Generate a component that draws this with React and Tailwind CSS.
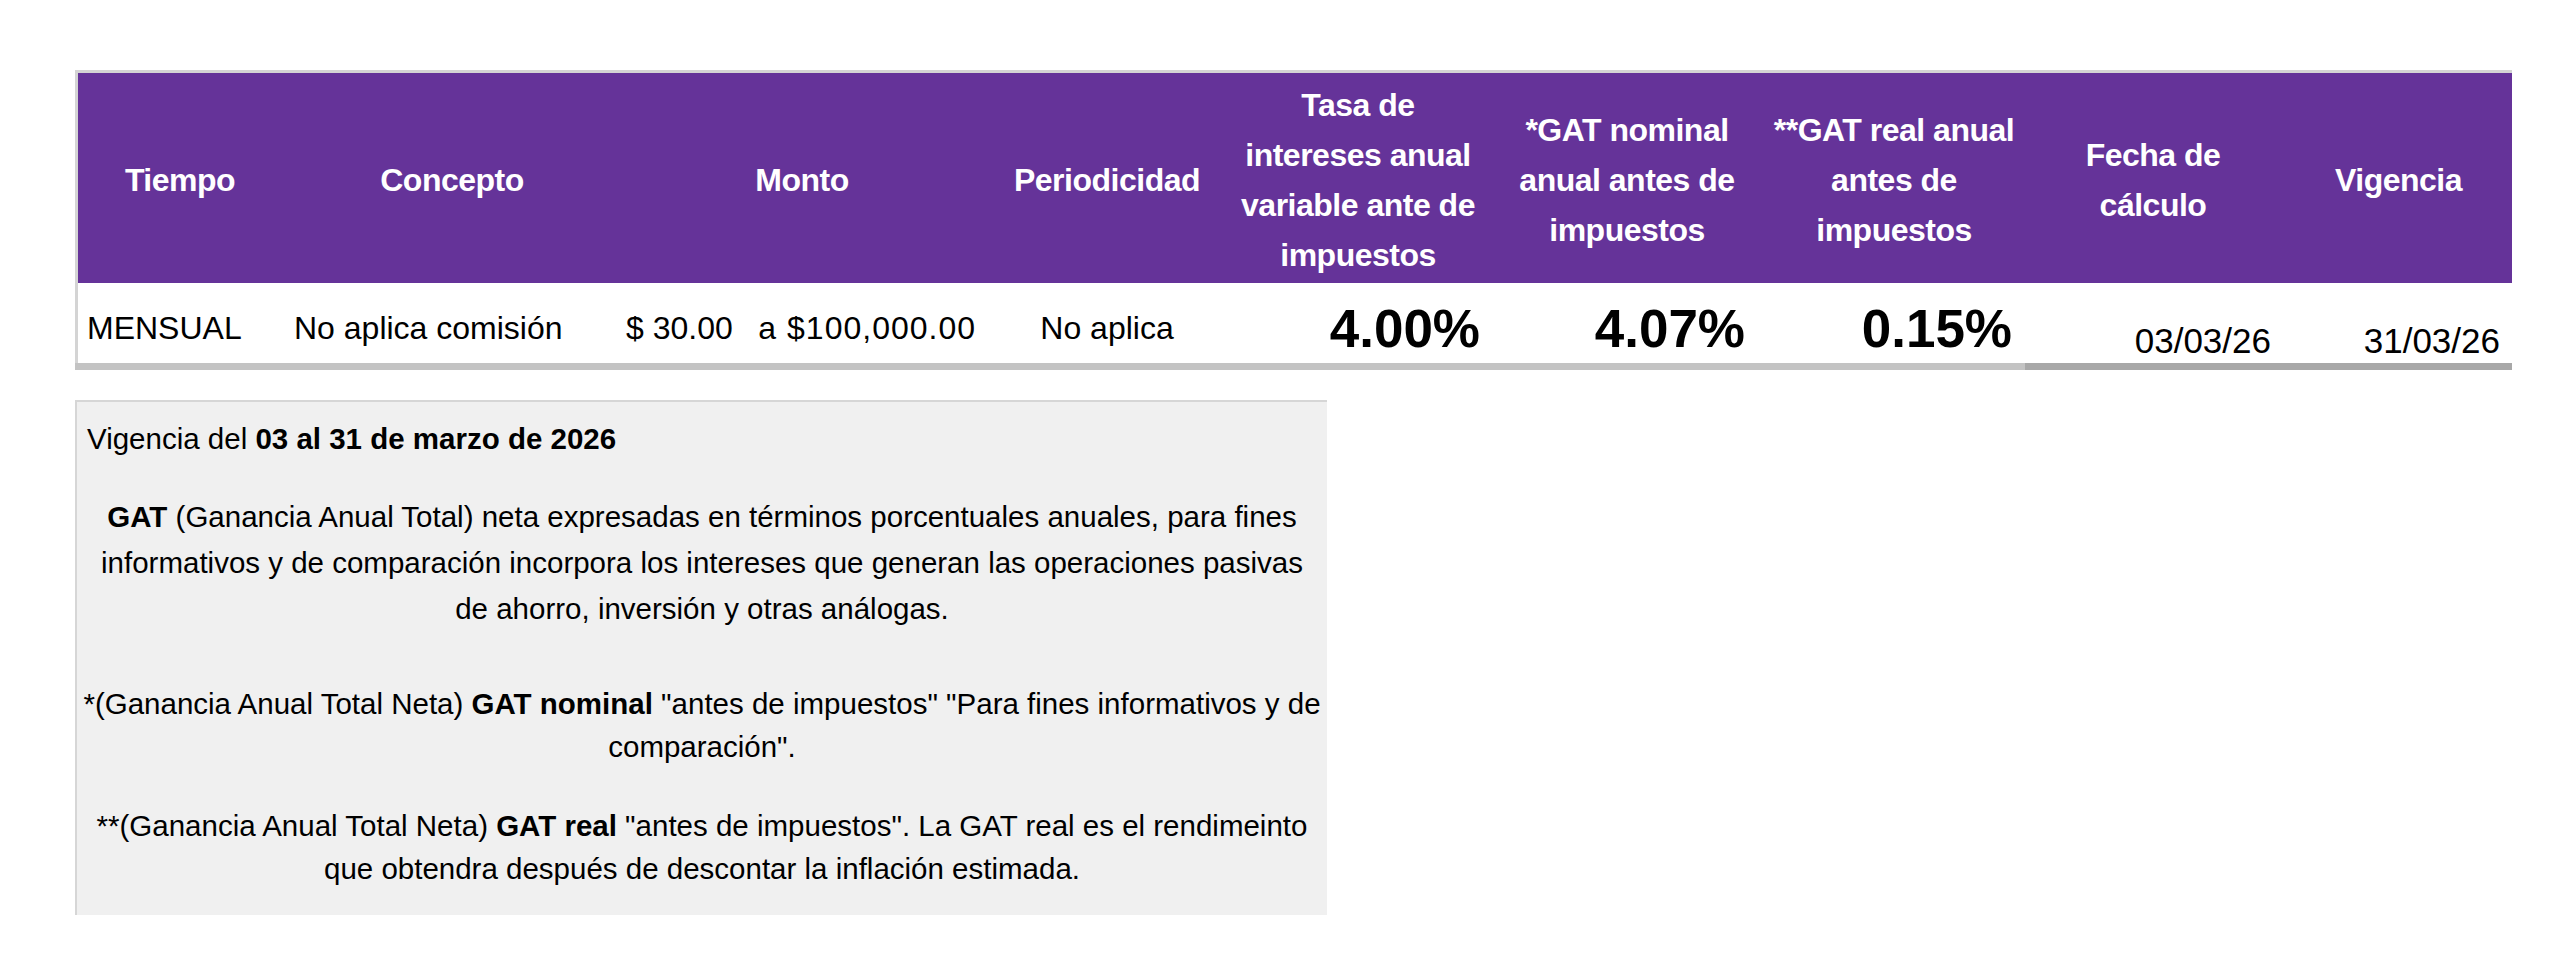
const FONT = "font-['Liberation_Sans',Arial,sans-serif]";

// ─── Header columns ───────────────────────────────────────────────────────────
const COLS = [
  { w: 'w-[204px]', head: ['Tiempo'] },
  { w: 'w-[340px]', head: ['Concepto'] },
  { w: 'w-[360px]', head: ['Monto'] },
  { w: 'w-[250px]', head: ['Periodicidad'] },
  { w: 'w-[252px]', head: ['Tasa de', 'intereses anual', 'variable ante de', 'impuestos'] },
  { w: 'w-[286px]', head: ['*GAT nominal', 'anual antes de', 'impuestos'] },
  { w: 'w-[248px]', head: ['**GAT real anual', 'antes de', 'impuestos'] },
  { w: 'w-[270px]', head: ['Fecha de', 'cálculo'] },
  { w: 'w-[221px]', head: ['Vigencia'] },
];

const HeadCell = ({ w, lines }) => (
  <div className={`${w} shrink-0 flex flex-col items-center justify-center text-center pt-[3px]`}>
    {lines.map((l) => (
      <span key={l} className="block leading-[50px] whitespace-nowrap">{l}</span>
    ))}
  </div>
);

const RateTable = () => (
  <div className="w-[2437px] border-t-[3px] border-l-[3px] border-[#d4d4d4]">
    <div className="flex h-[210px] bg-[#653399] text-white font-bold text-[32px] tracking-[-0.5px]">
      {COLS.map((c) => (
        <HeadCell key={c.head[0]} w={c.w} lines={c.head} />
      ))}
    </div>
    <div className="flex h-[80px] bg-white text-black items-end text-[32px] leading-none">
      <div className="w-[204px] shrink-0 pl-[9px] pb-[19px]">MENSUAL</div>
      <div className="w-[340px] shrink-0 pl-[12px] pb-[19px] whitespace-nowrap">No aplica comisión</div>
      <div className="w-[360px] shrink-0 flex justify-between pl-[4px] pr-[6px] pb-[19px] whitespace-nowrap">
        <span>$ 30.00</span>
        <span className="tracking-[1px]">a $100,000.00</span>
      </div>
      <div className="w-[250px] shrink-0 text-center pb-[19px]">No aplica</div>
      <div className="w-[252px] shrink-0 text-right pr-[4px] pb-[8px] font-bold text-[53px]">4.00%</div>
      <div className="w-[286px] shrink-0 text-right pr-[25px] pb-[8px] font-bold text-[53px]">4.07%</div>
      <div className="w-[248px] shrink-0 text-right pr-[6px] pb-[8px] font-bold text-[53px]">0.15%</div>
      <div className="w-[270px] shrink-0 text-right pr-[17px] pb-[5px] text-[35px]">03/03/26</div>
      <div className="w-[221px] shrink-0 text-right pr-[9px] pb-[5px] text-[35px]">31/03/26</div>
    </div>
    <div className="flex h-[7px] -ml-[3px]">
      <div className="w-[1950px] bg-[#c3c3c3]" />
      <div className="w-[487px] bg-[#a8a8a8]" />
    </div>
  </div>
);

// ─── Notes box ────────────────────────────────────────────────────────────────
const Notes = () => (
  <div className="mt-[30px] w-[1252px] bg-[#f0f0f0] border-t-2 border-l-2 border-[#d6d6d6] text-black text-[29.5px] pt-[17px] pb-[25px]">
    <p className="pl-[10px] leading-[40px]">
      Vigencia del <b>03 al 31 de marzo de 2026</b>
    </p>
    <p className="mt-[35px] leading-[46px] text-center px-[4px]">
      <b>GAT</b> (Ganancia Anual Total) neta expresadas en términos porcentuales anuales, para fines
      <br />
      informativos y de comparación incorpora los intereses que generan las operaciones pasivas
      <br />
      de ahorro, inversión y otras análogas.
    </p>
    <p className="mt-[50px] leading-[43px] text-center px-[2px]">
      *(Ganancia Anual Total Neta) <b>GAT nominal</b> "antes de impuestos" "Para fines informativos y de
      <br />
      comparación".
    </p>
    <p className="mt-[36px] leading-[43px] text-center px-[2px]">
      **(Ganancia Anual Total Neta) <b>GAT real</b> "antes de impuestos". La GAT real es el rendimeinto
      <br />
      que obtendra después de descontar la inflación estimada.
    </p>
  </div>
);

export default function App() {
  return (
    <div className={`${FONT} min-h-screen bg-white pt-[70px] pl-[75px]`}>
      <RateTable />
      <Notes />
    </div>
  );
}
